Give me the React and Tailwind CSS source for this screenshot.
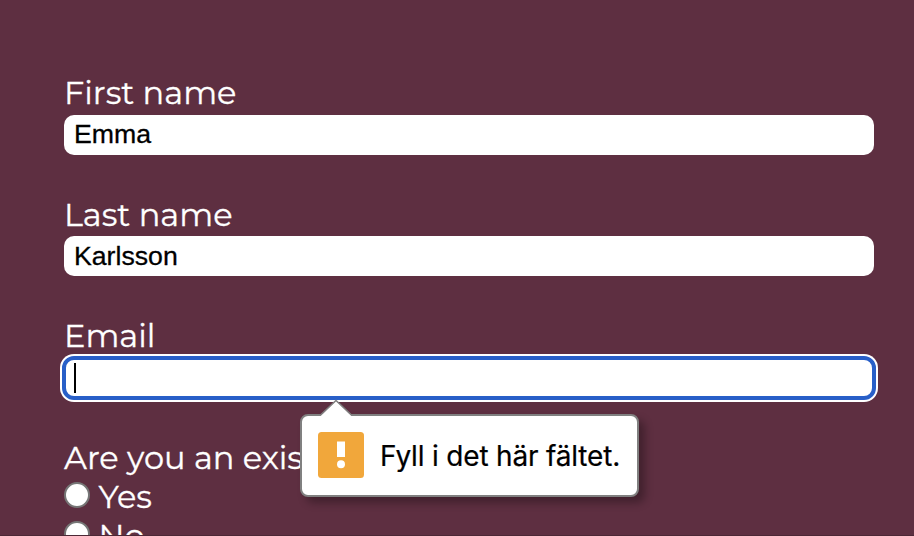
const labelFont = "font-['Montserrat','Lato',sans-serif] text-[32px] leading-[39px] text-white whitespace-pre [-webkit-text-stroke:0.3px_white]";

function Label({ children, className = "" }) {
  return (
    <div className={`${labelFont} h-[41px] ${className}`}>
      {children}
    </div>
  );
}

function Input({ value, className = "" }) {
  return (
    <div className="flex h-10 w-[810px] items-center rounded-[10px] bg-white px-[10px] font-['Liberation_Sans',Arial,sans-serif] text-[26.67px] leading-[30px] text-black">
      <span className={`[-webkit-text-stroke:0.3px_black] ${className}`}>{value}</span>
    </div>
  );
}

function Radio({ label }) {
  return (
    <div className={`flex h-[39px] items-start ${labelFont}`}>
      <span className="mt-[5px] mr-[8.5px] size-[26px] shrink-0 rounded-full border-2 border-[#767676] bg-white" />
      <span>{label}</span>
    </div>
  );
}

function ValidationBubble() {
  return (
    <div className="absolute top-[414px] left-[300px] flex h-[83px] w-[339px] items-center rounded-[8px] border-2 border-[#808080] bg-white pb-[2px] pl-4 shadow-[6px_6px_9px_rgba(0,0,0,0.3)]">
      <svg className="absolute -top-[17px] left-[17px]" width="36" height="20" viewBox="0 0 36 20">
        <path d="M1 17.5L17 1.5L33 17.5V20H1Z" fill="white" />
        <path d="M1 16.5L17 1.5L33 16.5" fill="none" stroke="#808080" strokeWidth="1.5" />
      </svg>
      <svg width="46" height="46" viewBox="0 0 46 46" className="shrink-0">
        <rect width="46" height="46" rx="3.5" fill="#f1a73b" />
        <rect x="19" y="9.5" width="8" height="15.5" fill="white" />
        <circle cx="23" cy="32.3" r="4" fill="white" />
      </svg>
      <span className="mt-[2px] ml-[16px] font-['Inter',sans-serif] text-[28px] leading-9 tracking-[-0.18px] whitespace-nowrap text-black [-webkit-text-stroke:0.2px_black]">
        Fyll i det här fältet.
      </span>
    </div>
  );
}

export default function App() {
  return (
    <main className="relative h-[536px] w-[914px] overflow-hidden bg-[#5e2f41] pt-[73px] pl-16">
      <div className="mb-[40px]">
        <Label className="mb-px">First name</Label>
        <Input value="Emma" className="-mt-[2px]" />
      </div>
      <div className="mb-[40px]">
        <Label>Last name</Label>
        <Input value="Karlsson" />
      </div>
      <div className="mb-[40px]">
        <Label className="mb-px">Email</Label>
        <div className="-mx-[2px] -my-[2px] flex h-11 w-[814px] items-center rounded-[12px] border-4 border-[#285fc8] bg-white pl-2 ring-2 ring-white">
          <span className="h-[30px] w-[2px] bg-black" />
        </div>
      </div>
      <Label>Are you an exis</Label>
      <div className="-mt-[2px]">
        <Radio label="Yes" />
        <Radio label="No" />
      </div>
      <ValidationBubble />
      <div className="absolute inset-x-0 bottom-0 h-px bg-[#4c2836]" />
    </main>
  );
}
